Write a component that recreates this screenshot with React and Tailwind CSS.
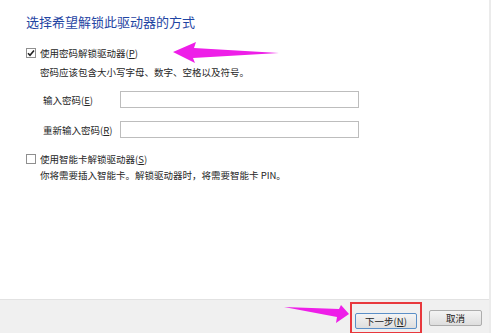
import React from 'react';

const font = { fontFamily: '"Noto Sans CJK SC", "Microsoft YaHei", sans-serif' };

const Checkbox = ({ checked }) => (
    <span className="flex items-center justify-center w-[10px] h-[10px] border border-[#8f8f8f] bg-white shrink-0">
        {checked && (
            <svg width="8" height="8" viewBox="0 0 8 8">
                <path d="M1 4.2 L3 6.3 L7 1.5" fill="none" stroke="#222" strokeWidth="1.6" />
            </svg>
        )}
    </span>
);

const Field = ({ label, hotkey, className }) => (
    <div className={`flex items-center ${className}`}>
        <span className="w-[77px] ml-[17px] text-[9.5px] leading-[12px] text-[#262626]">
            {label}(<span className="underline">{hotkey}</span>)
        </span>
        <div className="w-[239px] h-[17px] border border-[#bdbdbd] bg-white"></div>
    </div>
);

const Button = ({ children, primary }) => (
    <button
        className={`h-[16px] text-[9.5px] leading-[14px] text-[#222] rounded-[2px] border bg-gradient-to-b from-[#f4f4f4] to-[#dedede] ${
            primary ? 'w-[62px] border-[#5b8fc7]' : 'w-[53px] border-[#adadad]'
        }`}
    >
        {children}
    </button>
);

const App = () => {
    return (
        <div style={font} className="relative w-[491px] h-[333px] bg-white flex flex-col overflow-hidden border-r-2 border-[#ebebeb]">
            <div className="flex-1 pl-[26px] pt-[14px]">
                <h1 className="text-[13px] leading-[16px] text-[#1f45a3]">选择希望解锁此驱动器的方式</h1>

                <div className="flex items-center gap-[4px] mt-[17px] h-[12px]">
                    <Checkbox checked />
                    <span className="text-[9.5px] leading-[12px] text-[#262626]">
                        使用密码解锁驱动器(<span className="underline">P</span>)
                    </span>
                </div>
                <p className="ml-[14px] mt-[7px] text-[9.5px] leading-[12px] text-[#262626]">
                    密码应该包含大小写字母、数字、空格以及符号。
                </p>

                <Field label="输入密码" hotkey="E" className="mt-[13px]" />
                <Field label="重新输入密码" hotkey="R" className="mt-[13px]" />

                <div className="flex items-center gap-[4px] mt-[15px] h-[12px]">
                    <Checkbox />
                    <span className="text-[9.5px] leading-[12px] text-[#262626]">
                        使用智能卡解锁驱动器(<span className="underline">S</span>)
                    </span>
                </div>
                <p className="ml-[14px] mt-[4px] text-[9.5px] leading-[12px] text-[#262626]">
                    你将需要插入智能卡。解锁驱动器时，将需要智能卡 PIN。
                </p>
            </div>

            <div className="h-[34px] border-t border-[#e2e2e2] bg-[#f0f0f0] flex items-start justify-end pt-[2px] pr-[7px]">
                <div className="flex items-center gap-[7px]">
                    <div className="border-2 border-[#e8383d] px-[3px] py-[2px]">
                        <Button primary>
                            下一步(<span className="underline">N</span>)
                        </Button>
                    </div>
                    <Button>取消</Button>
                </div>
            </div>

            {/* annotation arrows */}
            <svg className="absolute left-0 top-0 pointer-events-none" width="491" height="333">
                <polygon
                    points="173,52 196,42 194,48 279,53 193,58 195,63"
                    fill="#ee1ee8"
                />
                <polygon
                    points="349,314 341,305 339,309 284,307 337,317 336,323"
                    fill="#ee1ee8"
                />
            </svg>
        </div>
    );
};

export default App;
